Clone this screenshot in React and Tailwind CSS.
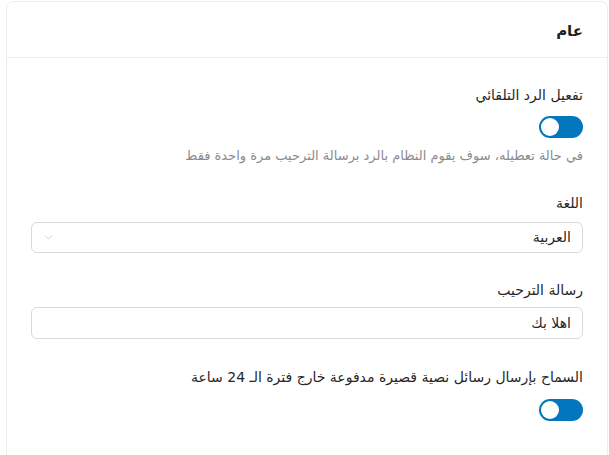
import { ChevronDown } from "lucide-react";

const Toggle = () => (
  <button
    type="button"
    dir="ltr"
    className="relative flex h-[22px] w-[44px] items-center justify-start rounded-full bg-[#0377bd] px-[2px]"
  >
    <span className="h-[18px] w-[18px] rounded-full bg-white" />
  </button>
);

const Label = ({ children, className = "" }) => (
  <div className={`text-[14px] leading-[22px] text-[#262626] ${className}`}>
    {children}
  </div>
);

export default function App() {
  return (
    <div
      dir="rtl"
      className="h-[455px] overflow-hidden bg-white pr-px pl-[6px] pt-px"
      style={{ fontFamily: '"DejaVu Sans", "Noto Sans", sans-serif' }}
    >
      <div className="h-[470px] rounded-t-[7px] border border-[#ededed] bg-white">
        {/* header */}
        <div className="flex h-[56px] items-center border-b border-[#ededed] px-6 pt-[4px]">
          <h2 className="text-[15px] font-bold text-[#1f1f1f]">عام</h2>
        </div>

        <div className="px-6 pt-[26px]">
          <Label>تفعيل الرد التلقائي</Label>
          <div className="mt-[10px] flex">
            <Toggle />
          </div>
          <p className="mt-[8px] text-[13px] leading-[20px] text-[#8c8c8c]">
            في حالة تعطيله، سوف يقوم النظام بالرد برسالة الترحيب مرة واحدة فقط
          </p>

          <Label className="mt-[26px]">اللغة</Label>
          <div className="mt-[8px] flex h-[31px] items-center justify-between rounded-[6px] border border-[#d9d9d9] pr-[11px] pl-[10px]">
            <span className="text-[14px] text-[#262626]">العربية</span>
            <ChevronDown size={13} strokeWidth={1.2} className="text-[#b5b5b5]" />
          </div>

          <Label className="mt-[26px]">رسالة الترحيب</Label>
          <div className="mt-[6px] flex h-[32px] items-center rounded-[6px] border border-[#d9d9d9] px-[11px]">
            <span className="text-[14px] text-[#262626]">اهلا بك</span>
          </div>

          <Label className="mt-[27px] text-[13.5px]">
            السماح بإرسال رسائل نصية قصيرة مدفوعة خارج فترة الـ 24 ساعة
          </Label>
          <div className="mt-[11px] flex">
            <Toggle />
          </div>
        </div>
      </div>
    </div>
  );
}
